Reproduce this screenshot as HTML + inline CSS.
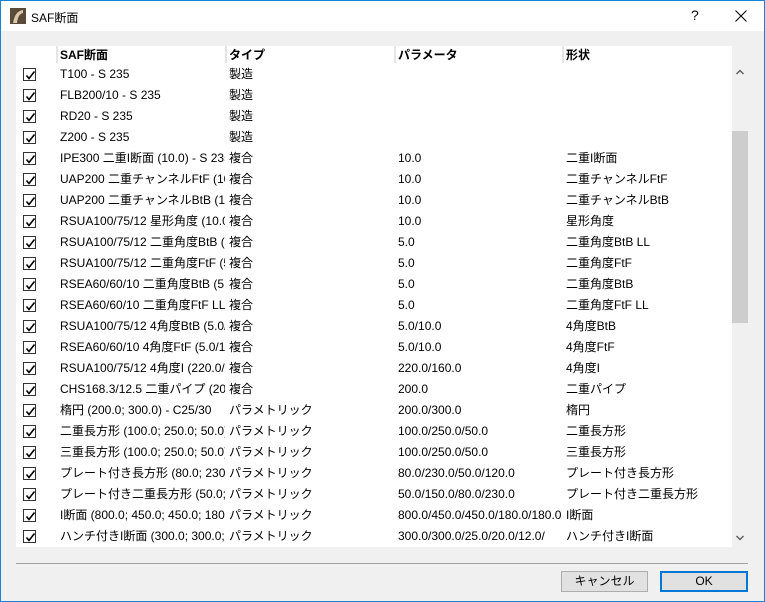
<!DOCTYPE html>
<html><head><meta charset="utf-8"><style>
*{margin:0;padding:0;box-sizing:border-box}
body{width:765px;height:602px;overflow:hidden;background:#f0f0f0;font-family:"Liberation Sans","Noto Sans CJK JP",sans-serif;font-size:12px;color:#000;position:relative}
.win{position:absolute;left:0;top:0;width:765px;height:602px;border:1px solid #1883d7}
.title{position:absolute;left:1px;top:1px;width:763px;height:30px;background:#fff}
.list{position:absolute;left:16px;top:46px;width:716px;height:501px;background:#fff;overflow:hidden}
.sb{position:absolute;left:732px;top:46px;width:16px;height:501px;background:#f0f0f0}
.thumb{position:absolute;left:0;top:85px;width:16px;height:192px;background:#cdcdcd}
.row{position:absolute;left:0;height:21px;width:716px;line-height:21px}
.c{position:absolute;top:0;white-space:nowrap;overflow:hidden}
.cb{position:absolute;left:7px;top:4px;width:13px;height:13px;border:1px solid #333;background:#fff}
.cb svg{position:absolute;left:1px;top:1px}
.hd{font-weight:bold;height:18px;line-height:18px}
.sep{position:absolute;top:0;width:2px;height:17px;background:#e5e5e5}
.btn{position:absolute;top:571px;height:21px;background:#e1e1e1;border:1px solid #adadad;text-align:center;line-height:19px}
</style></head><body>
<div class="win"></div>
<div class="title">
<svg style="position:absolute;left:9px;top:7px" width="16" height="16"><rect width="16" height="16" fill="#5a4a3a"/><path d="M3 15 Q5 3 13 2 L13 5 Q8 6 7 15Z" fill="#d8c8a8"/></svg>
<span style="position:absolute;left:30px;top:8px;font-size:12px">SAF断面</span>
<span style="position:absolute;left:690px;top:6px;font-size:14px">?</span>
<svg style="position:absolute;left:734px;top:9px" width="12" height="12"><path d="M0.5 0.5L11.5 11.5M11.5 0.5L0.5 11.5" stroke="#000" stroke-width="1"/></svg>
</div>
<div class="list" id="L">
<div class="row hd" style="top:0">
<div class="sep" style="left:40px"></div><div class="c" style="left:44px">SAF断面</div>
<div class="sep" style="left:209px"></div><div class="c" style="left:213px">タイプ</div>
<div class="sep" style="left:378px"></div><div class="c" style="left:382px">パラメータ</div>
<div class="sep" style="left:546px"></div><div class="c" style="left:550px">形状</div>
</div>
</div>
<div class="sb"><div class="thumb"></div>
<svg style="position:absolute;left:4px;top:23px" width="8" height="6"><path d="M0.5 5L4 1.5L7.5 5" stroke="#606060" stroke-width="1.5" fill="none"/></svg>
<svg style="position:absolute;left:4px;top:489px" width="8" height="6"><path d="M0.5 1L4 4.5L7.5 1" stroke="#606060" stroke-width="1.5" fill="none"/></svg>
</div>
<div style="position:absolute;left:16px;top:563px;width:732px;height:1px;background:#a0a0a0"></div>
<div class="btn" style="left:561px;width:87px">キャンセル</div>
<div class="btn" style="left:660px;width:88px;border:2px solid #0078d7;line-height:17px">OK</div>
<script>
var d=[
["T100 - S 235","製造","",""],
["FLB200/10 - S 235","製造","",""],
["RD20 - S 235","製造","",""],
["Z200 - S 235","製造","",""],
["IPE300 二重I断面 (10.0) - S 235","複合","10.0","二重I断面"],
["UAP200 二重チャンネルFtF (10.0)","複合","10.0","二重チャンネルFtF"],
["UAP200 二重チャンネルBtB (10.0)","複合","10.0","二重チャンネルBtB"],
["RSUA100/75/12 星形角度 (10.0)","複合","10.0","星形角度"],
["RSUA100/75/12 二重角度BtB (5.0)","複合","5.0","二重角度BtB LL"],
["RSUA100/75/12 二重角度FtF (5.0)","複合","5.0","二重角度FtF"],
["RSEA60/60/10 二重角度BtB (5.0)","複合","5.0","二重角度BtB"],
["RSEA60/60/10 二重角度FtF LL","複合","5.0","二重角度FtF LL"],
["RSUA100/75/12 4角度BtB (5.0/10.0)","複合","5.0/10.0","4角度BtB"],
["RSEA60/60/10 4角度FtF (5.0/10.0)","複合","5.0/10.0","4角度FtF"],
["RSUA100/75/12 4角度I (220.0/160.0)","複合","220.0/160.0","4角度I"],
["CHS168.3/12.5 二重パイプ (200.0)","複合","200.0","二重パイプ"],
["楕円 (200.0; 300.0) - C25/30","パラメトリック","200.0/300.0","楕円"],
["二重長方形 (100.0; 250.0; 50.0)","パラメトリック","100.0/250.0/50.0","二重長方形"],
["三重長方形 (100.0; 250.0; 50.0)","パラメトリック","100.0/250.0/50.0","三重長方形"],
["プレート付き長方形 (80.0; 230.0)","パラメトリック","80.0/230.0/50.0/120.0","プレート付き長方形"],
["プレート付き二重長方形 (50.0; 150.0)","パラメトリック","50.0/150.0/80.0/230.0","プレート付き二重長方形"],
["I断面 (800.0; 450.0; 450.0; 180.0)","パラメトリック","800.0/450.0/450.0/180.0/180.0","I断面"],
["ハンチ付きI断面 (300.0; 300.0; 25.0)","パラメトリック","300.0/300.0/25.0/20.0/12.0/","ハンチ付きI断面"]];
var L=document.getElementById('L'),h='';
d.forEach(function(r,i){var t=18+i*21;
h+='<div class="row" style="top:'+t+'px"><div class="cb"><svg width="11" height="11"><path d="M1.5 5.5L4 8.5L9.5 1.5" stroke="#000" stroke-width="1.6" fill="none"/></svg></div>'+
'<div class="c" style="left:44px;width:165px">'+r[0]+'</div><div class="c" style="left:213px;width:165px">'+r[1]+'</div><div class="c" style="left:382px;width:165px">'+r[2]+'</div><div class="c" style="left:550px;width:165px">'+r[3]+'</div></div>';});
L.insertAdjacentHTML('beforeend',h);
</script>
</body></html>
